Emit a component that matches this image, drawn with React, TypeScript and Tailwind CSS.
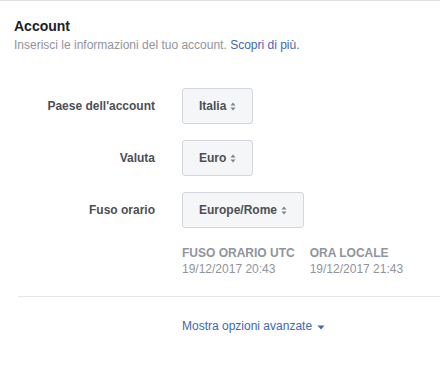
import React from "react";

function Caret() {
  return (
    <svg width="6" height="9" viewBox="0 0 6 9" className="ml-[4px] inline-block">
      <path d="M3 0.5L5.5 3.5H0.5Z" fill="#7f8389" />
      <path d="M3 8.5L5.5 5.5H0.5Z" fill="#7f8389" />
    </svg>
  );
}

function SelectButton({ value }: { value: string }) {
  return (
    <button className="flex h-[36px] items-center rounded-[3px] border border-[#d3d6db] bg-[#f5f6f7] px-[16px] text-[12px] font-bold text-[#4b4f56]">
      {value}
      <Caret />
    </button>
  );
}

const rows = [
  { label: "Paese dell'account", value: "Italia" },
  { label: "Valuta", value: "Euro" },
  { label: "Fuso orario", value: "Europe/Rome" },
];

export default function App() {
  return (
    <div className="h-[367px] w-[440px] border-t border-[#e0e0e0] bg-white font-['Liberation_Sans',Arial,sans-serif]">
      <div className="px-[14px] pt-[16px]">
        <h2 className="text-[14px] font-bold leading-[18px] text-[#1d2129]">Account</h2>
        <p className="mt-[2px] text-[12px] leading-[16px] text-[#90949c]">
          Inserisci le informazioni del tuo account.{" "}
          <a className="text-[#4267b2]">Scopri di più.</a>
        </p>
      </div>

      <div className="mt-[35px] grid grid-cols-[155px_auto] gap-x-[27px] gap-y-[16px]">
        {rows.map((r) => (
          <React.Fragment key={r.label}>
            <div className="flex items-center justify-end text-[12px] font-bold text-[#4b4f56]">{r.label}</div>
            <div className="flex">
              <SelectButton value={r.value} />
            </div>
          </React.Fragment>
        ))}
        <div />
        <div className="flex gap-[15px] pt-[1px] text-[12px] leading-[16px] text-[#90949c]">
          <div>
            <div className="font-bold">FUSO ORARIO UTC</div>
            <div>19/12/2017 20:43</div>
          </div>
          <div>
            <div className="font-bold">ORA LOCALE</div>
            <div>19/12/2017 21:43</div>
          </div>
        </div>
      </div>

      <div className="ml-[18px] mt-[19px] border-t border-[#e5e5e5]" />

      <div className="pl-[182px] pt-[16px]">
        <a className="inline-flex items-center text-[12px] text-[#4267b2]">
          Mostra opzioni avanzate
          <svg width="8" height="5" viewBox="0 0 8 5" className="ml-[5px] mt-[2px]">
            <path d="M0.5 0.5H7.5L4 4.5Z" fill="#4267b2" />
          </svg>
        </a>
      </div>
    </div>
  );
}
